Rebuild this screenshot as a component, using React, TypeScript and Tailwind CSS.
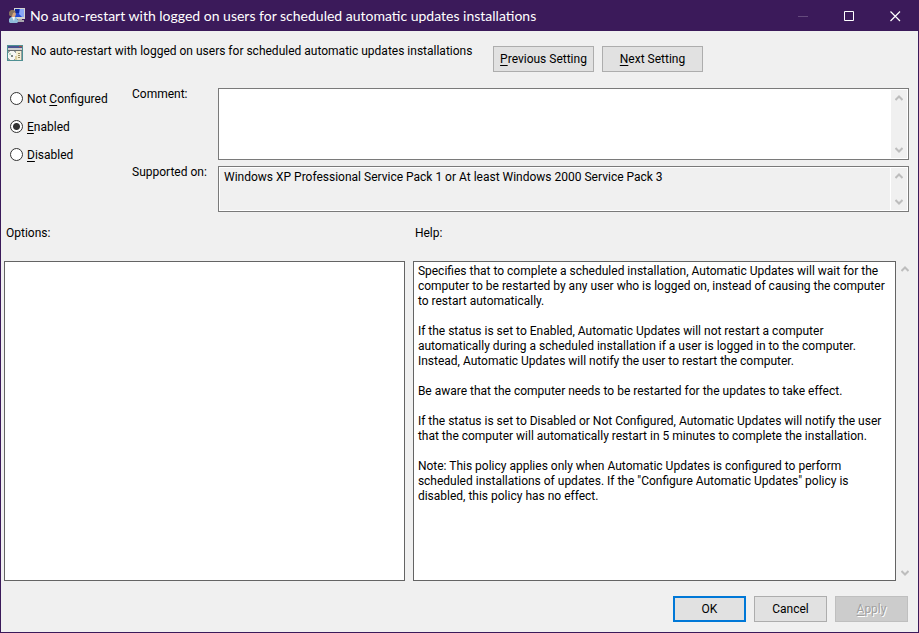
import { useState, type ReactNode } from "react";

const POLICY = "No auto-restart with logged on users for scheduled automatic updates installations";

const HELP = [
  `Specifies that to complete a scheduled installation, Automatic Updates will wait for the
computer to be restarted by any user who is logged on, instead of causing the computer
to restart automatically.`,
  `If the status is set to Enabled, Automatic Updates will not restart a computer
automatically during a scheduled installation if a user is logged in to the computer.
Instead, Automatic Updates will notify the user to restart the computer.`,
  `Be aware that the computer needs to be restarted for the updates to take effect.`,
  `If the status is set to Disabled or Not Configured, Automatic Updates will notify the user
that the computer will automatically restart in 5 minutes to complete the installation.`,
  `Note: This policy applies only when Automatic Updates is configured to perform
scheduled installations of updates. If the "Configure Automatic Updates" policy is
disabled, this policy has no effect.`,
];

function Key({ children }: { children: ReactNode }) {
  return <span className="underline underline-offset-2">{children}</span>;
}

function MonitorUserIcon() {
  return (
    <svg className="size-4 shrink-0" viewBox="0 0 16 16" aria-hidden="true">
      <path d="M5 0h11v11H5z" fill="#d5d3cf" />
      <path d="M6 1h9v8H6z" fill="#2149d6" />
      <path d="M11 1h4v8h-2l-3-3z" fill="#8aa6f5" />
      <path d="M6 1h4v4H6z" fill="#10279c" />
      <path d="M9 11h4v1h2v2H8v-2h1z" fill="#aaa8b0" />
      <path d="M0 14v-3l2-2h5l2 3v2l-1 1H1z" fill="#8fbbd9" />
      <path d="M3 9h3l-1 4z" fill="#f4f8fc" />
      <path d="M2 4h4l1 2-1 3H3L1 7z" fill="#d8a67c" />
      <path d="M0 7V4l2-2h3l2 2-3 1-1 3H1z" fill="#857060" />
    </svg>
  );
}

function InstallerIcon() {
  return (
    <svg className="size-4 shrink-0" viewBox="0 0 16 16" aria-hidden="true" shapeRendering="crispEdges">
      <path d="M0 0h16v16H0z" fill="#4f9093" />
      <path d="M1 1h14v2H1z" fill="#4a5390" />
      <path d="M12 1h3v1h-3z" fill="#a3513f" />
      <path d="M1 3h14v2H1z" fill="#cfcfcf" />
      <path d="M1 5h14v1H1z" fill="#666c6e" />
      <path d="M1 6h14v9H1z" fill="#979f9f" />
      <path d="M3 6h4v1h1v1h1v5H8v1H7v1H3v-1H2v-1H1V8h1V7h1z" fill="#f6f6f4" />
      <path d="M4 10h2v2H4z" fill="#7d8584" />
      <path d="M2 8h2v2H2z" fill="#bfdcc4" />
      <path d="M9 6h5v9H9z" fill="#f4edd2" />
      <path d="M11 8h2v1h-2zM11 10h2v1h-2zM11 12h2v1h-2z" fill="#9a8c62" />
      <path d="M8 11h2v4H8z" fill="#dfd0a0" />
    </svg>
  );
}

function Chevron({ down = false }: { down?: boolean }) {
  return (
    <svg className="h-2 w-2" viewBox="0 0 8 8" fill="none" stroke="#bdbdbd" strokeWidth="2" aria-hidden="true">
      <path d={down ? "M.5 2L4 5.500 7.500 2" : "M.5 6L4 2.500 7.500 6"} />
    </svg>
  );
}

function ScrollBar({ className }: { className: string }) {
  return (
    <div className={`flex shrink-0 flex-col items-center justify-between bg-[#f0f0f0] ${className}`}>
      <Chevron />
      <Chevron down />
    </div>
  );
}

const BUTTON =
  "flex h-[26px] items-center justify-center border border-[#adadad] bg-[#e1e1e1] text-black whitespace-nowrap";

export default function App() {
  const [state, setState] = useState("enabled");
  const [comment, setComment] = useState("");
  const radios = [
    { id: "none", label: <>Not <Key>C</Key>onfigured</> },
    { id: "enabled", label: <><Key>E</Key>nabled</> },
    { id: "disabled", label: <><Key>D</Key>isabled</> },
  ];

  return (
    <div className="flex min-h-screen flex-col border border-[#3b1a5a] bg-[#f0f0f0] font-['Roboto','Open_Sans',sans-serif] text-[12px] leading-[15px] text-black">
      <header className="flex h-[30px] shrink-0 items-center bg-[#3b1a5a] pl-2 text-white">
        <MonitorUserIcon />
        <h1 className="ml-[5px] flex-1 truncate font-['Lato','Open_Sans',sans-serif] text-[14px] leading-5">{POLICY}</h1>
        <button type="button" aria-label="Minimize" disabled className="flex h-full w-[46px] items-center justify-center">
          <svg className="size-[11px]" viewBox="0 0 11 11" aria-hidden="true">
            <path d="M0 5h10v1H0z" fill="#654a7d" />
          </svg>
        </button>
        <button type="button" aria-label="Maximize" className="flex h-full w-[46px] items-center justify-center">
          <svg className="size-[11px]" viewBox="0 0 11 11" fill="none" stroke="#fff" aria-hidden="true">
            <path d="M.5 .5h9v9h-9z" />
          </svg>
        </button>
        <button type="button" aria-label="Close" className="flex h-full w-[46px] items-center justify-center">
          <svg className="size-[11px]" viewBox="0 0 11 11" fill="none" stroke="#fff" strokeWidth="1.2" aria-hidden="true">
            <path d="M.5 .5l9.500 9.500M10 .5l-9.500 9.500" />
          </svg>
        </button>
      </header>

      <section className="flex items-start px-1.5 pt-[14px]">
        <InstallerIcon />
        <p className="ml-2 w-[462px] whitespace-nowrap leading-3">{POLICY}</p>
        <div className="flex gap-2 pt-px">
          <button type="button" className={`${BUTTON} w-[101px]`}>
            <span><Key>P</Key>revious Setting</span>
          </button>
          <button type="button" className={`${BUTTON} w-[101px]`}>
            <span><Key>N</Key>ext Setting</span>
          </button>
        </div>
      </section>

      <section className="mt-4 flex px-[9px]">
        <fieldset className="flex w-[122px] shrink-0 flex-col gap-[13px] pt-1">
          {radios.map((r) => (
            <label key={r.id} className="flex items-start gap-1">
              <input
                type="radio"
                name="policy-state"
                checked={state === r.id}
                onChange={() => setState(r.id)}
                className="size-[13px] appearance-none rounded-full border border-[#333] bg-white checked:bg-[radial-gradient(circle,#333_0_3px,#fff_4px)]"
              />
              <span>{r.label}</span>
            </label>
          ))}
        </fieldset>
        <div className="grid flex-1 grid-cols-[86px_1fr] gap-y-1.5">
          <label htmlFor="comment" className="-mt-px">Comment:</label>
          <div className="flex h-[72px] border border-[#7a7a7a] bg-white p-px">
            <textarea
              id="comment"
              value={comment}
              onChange={(e) => setComment(e.target.value)}
              className="min-w-0 flex-1 resize-none overflow-hidden px-1 py-0.5 outline-none"
            />
            <ScrollBar className="w-4 py-1" />
          </div>
          <label htmlFor="supported" className="-mt-px">Supported on:</label>
          <div className="flex h-[46px] border border-[#7a7a7a] bg-[#f0f0f0]">
            <textarea
              id="supported"
              readOnly
              value="Windows XP Professional Service Pack 1 or At least Windows 2000 Service Pack 3"
              className="min-w-0 flex-1 resize-none overflow-hidden border border-white px-1 py-0.5 outline-none"
            />
            <ScrollBar className="w-[17px] border-y border-r border-white py-1" />
          </div>
        </div>
      </section>

      <section className="mt-[14px] grid flex-1 grid-cols-[4fr_5fr] grid-rows-[auto_1fr] gap-x-2 gap-y-5 pr-1 pl-[3px]">
        <h2 className="pl-0.5">Options:</h2>
        <h2 className="pl-0.5">Help:</h2>
        <div className="border border-[#646464] bg-white" />
        <div className="flex min-w-0">
          <div className="flex min-w-0 flex-1 flex-col gap-[15px] border border-[#646464] bg-white px-1 py-0.5">
            {HELP.map((p) => (
              <p key={p} className="whitespace-pre-line">{p}</p>
            ))}
          </div>
          <ScrollBar className="w-[18px] py-1" />
        </div>
      </section>

      <footer className="flex justify-end gap-2 pt-[15px] pr-2.5 pb-2.5">
        <button type="button" className="flex h-[26px] w-[73px] items-center justify-center border-2 border-[#0078d7] bg-[#e1e1e1] text-black">
          OK
        </button>
        <button type="button" className={`${BUTTON} w-[73px]`}>Cancel</button>
        <button
          type="button"
          disabled
          className="flex h-[26px] w-[73px] items-center justify-center border border-[#bfbfbf] bg-[#cccccc] text-[#a0a0a0] [text-shadow:1px_1px_0_#fff]"
        >
          <span><Key>A</Key>pply</span>
        </button>
      </footer>
    </div>
  );
}
